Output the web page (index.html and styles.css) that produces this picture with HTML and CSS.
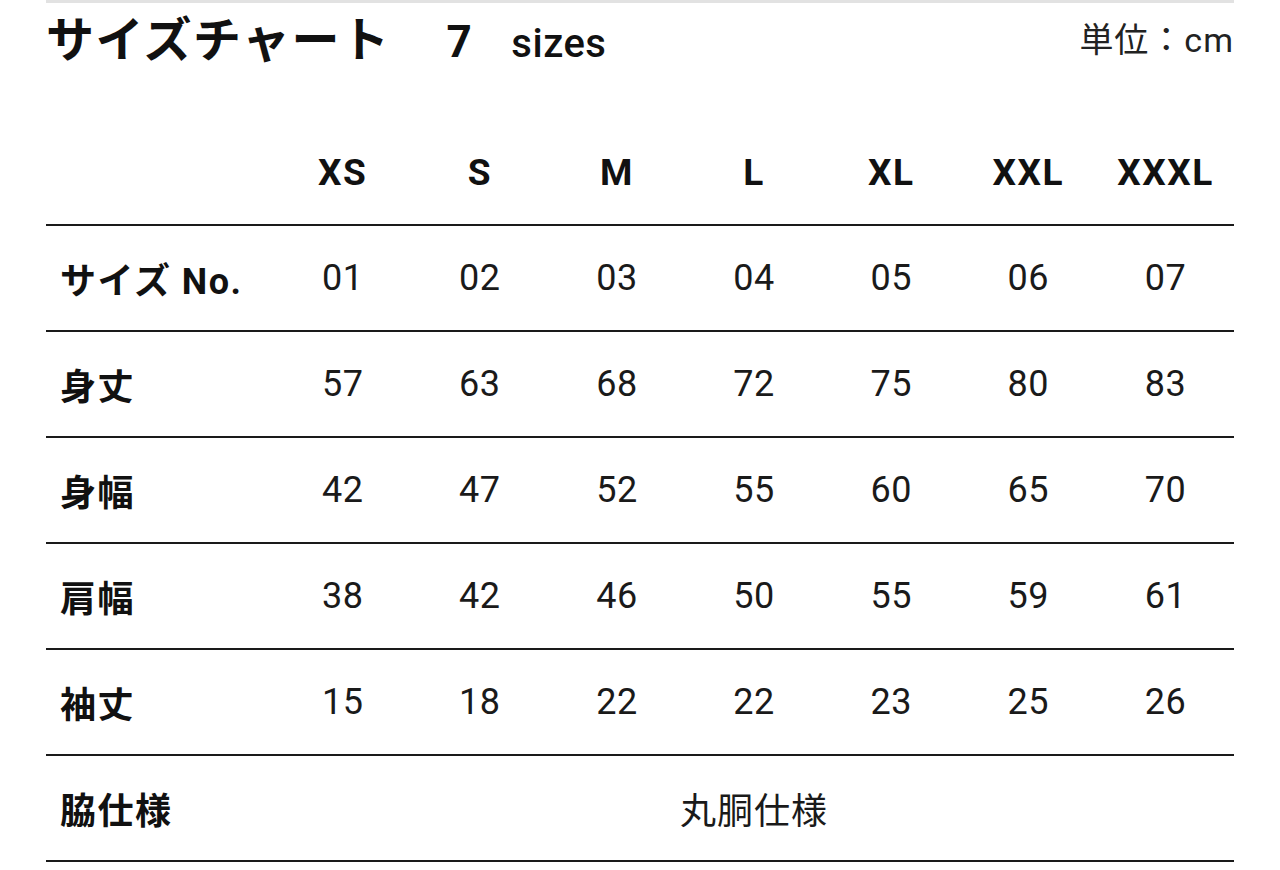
FILE: index.html
```html
<!DOCTYPE html>
<html lang="ja">
<head>
<meta charset="utf-8">
<title>サイズチャート</title>
<link rel="stylesheet" href="styles.css">
</head>
<body>
<div class="page">
  <div class="topbar"></div>
  <div class="title-row">
    <h1 class="title">サイズチャート<span class="count">7</span><span class="sizes">sizes</span></h1>
    <div class="unit">単位：cm</div>
  </div>
  <table class="chart">
    <thead>
      <tr>
        <th class="label"></th>
        <th>XS</th><th>S</th><th>M</th><th>L</th><th>XL</th><th>XXL</th><th>XXXL</th>
      </tr>
    </thead>
    <tbody>
      <tr>
        <th class="label">サイズ No.</th>
        <td>01</td><td>02</td><td>03</td><td>04</td><td>05</td><td>06</td><td>07</td>
      </tr>
      <tr>
        <th class="label">身丈</th>
        <td>57</td><td>63</td><td>68</td><td>72</td><td>75</td><td>80</td><td>83</td>
      </tr>
      <tr>
        <th class="label">身幅</th>
        <td>42</td><td>47</td><td>52</td><td>55</td><td>60</td><td>65</td><td>70</td>
      </tr>
      <tr>
        <th class="label">肩幅</th>
        <td>38</td><td>42</td><td>46</td><td>50</td><td>55</td><td>59</td><td>61</td>
      </tr>
      <tr>
        <th class="label">袖丈</th>
        <td>15</td><td>18</td><td>22</td><td>22</td><td>23</td><td>25</td><td>26</td>
      </tr>
      <tr>
        <th class="label">脇仕様</th>
        <td class="span" colspan="7">丸胴仕様</td>
      </tr>
    </tbody>
  </table>
</div>
</body>
</html>
```

FILE: styles.css
```css
html, body {
  margin: 0;
  padding: 0;
  background: #fff;
}

body {
  font-family: Roboto, "Noto Sans CJK JP", sans-serif;
  color: #111;
}

.page {
  width: 1188px;
  margin-left: 46px;
}

.topbar {
  height: 3px;
  background: #e2e2e2;
}

.title-row {
  display: flex;
  justify-content: space-between;
  align-items: flex-start;
  height: 119px;
  margin-top: -2px;
}

.title {
  margin: 0;
  font-size: 48px;
  font-weight: 700;
  line-height: 80px;
  letter-spacing: 1.5px;
}

.count {
  margin-left: 56px;
  font-size: 44px;
}

.sizes {
  margin-left: 38px;
  font-size: 40px;
  font-weight: 500;
  letter-spacing: 0.5px;
}

.unit {
  margin-top: 17px;
  font-size: 34px;
  line-height: 44px;
  font-weight: 400;
  color: #222;
  letter-spacing: 1px;
}

.chart {
  width: 1188px;
  border-collapse: collapse;
  table-layout: fixed;
}

.chart th,
.chart td {
  height: 104px;
  padding: 0;
  text-align: center;
  vertical-align: middle;
  border-bottom: 2px solid #1a1a1a;
  font-size: 36px;
}

.chart thead th {
  font-weight: 700;
  width: 137px;
  font-size: 37px;
  letter-spacing: 1.5px;
}

.chart th.label {
  width: 214px;
  padding-left: 14px;
  text-align: left;
  font-weight: 700;
  font-size: 36px;
  letter-spacing: 1.5px;
}

.chart td {
  font-weight: 400;
  color: #1a1a1a;
  letter-spacing: 0.5px;
}

.chart td.span {
  font-size: 36px;
  letter-spacing: 1px;
}
```
